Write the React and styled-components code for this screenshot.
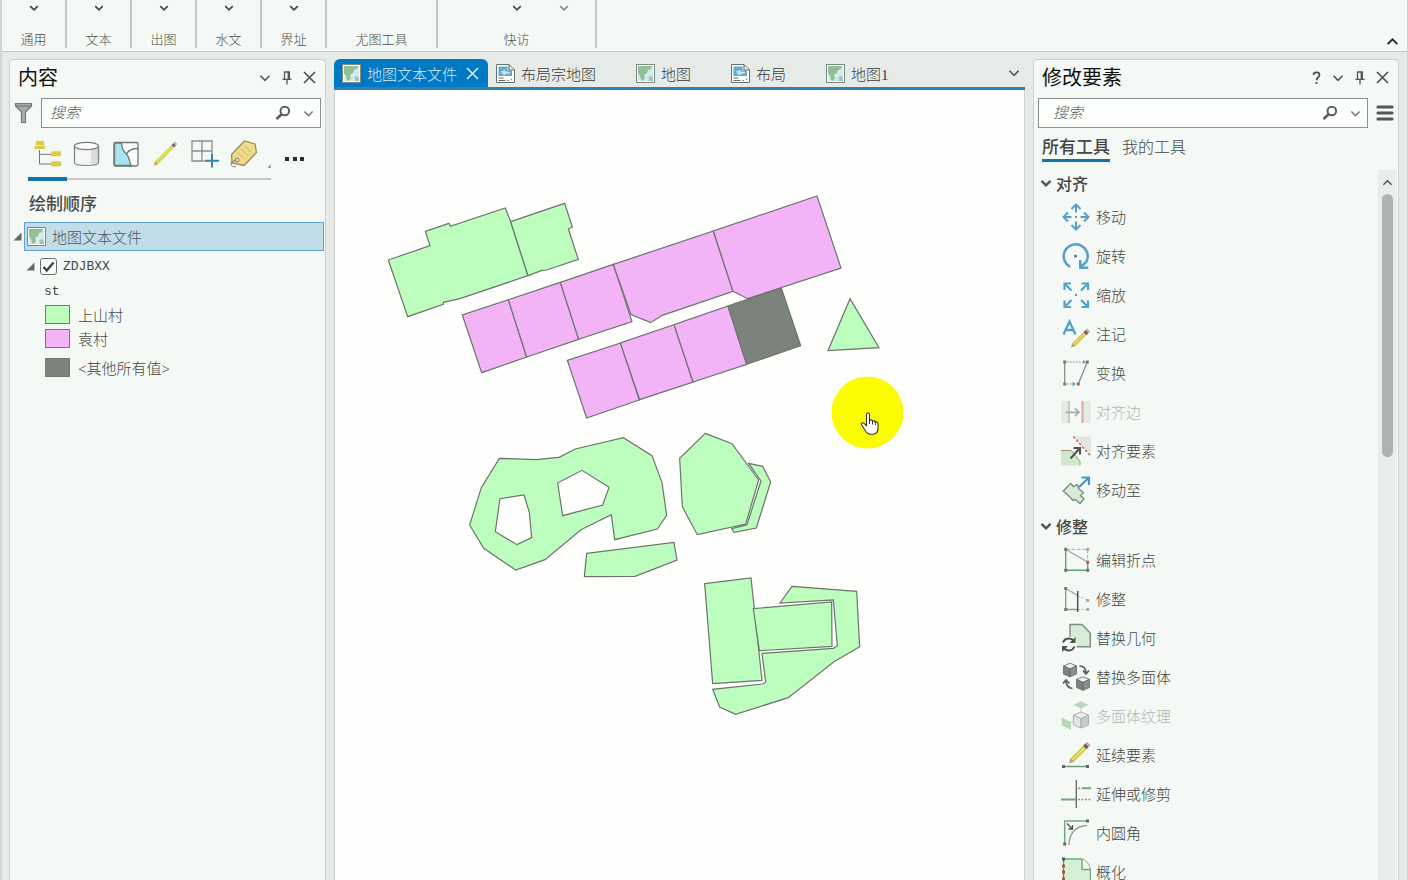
import React from 'react';
import styled, { createGlobalStyle } from 'styled-components';

const GlobalStyle = createGlobalStyle`
  * { box-sizing: border-box; }
  html, body { margin: 0; padding: 0; }
  body {
    background: #e7ebe8;
    color: #444744;
    font-family: "Liberation Serif", "Noto Sans CJK SC", sans-serif;
    font-size: 15px;
    font-weight: 300;
  }
  button, input { font: inherit; color: inherit; }
  button { margin: 0; padding: 0; border: 0; background: none; cursor: pointer; }
  svg { display: block; flex: none; }
`;

const Window = styled.div`
  display: flex;
  flex-direction: column;
  height: 100vh;
  overflow: hidden;
  border-left: 2px solid #d3d7d4;
  border-right: 1px solid #cfd3d0;
`;

/* ribbon */

const Ribbon = styled.header`
  display: flex;
  height: 52px;
  flex: none;
  background: #f4f9f5;
  border-bottom: 1px solid #c4c9c5;
`;

const RibbonGroup = styled.section`
  display: flex;
  flex-direction: column;
  justify-content: space-between;
  align-items: center;
  width: ${(p) => p.$width}px;
  height: 48px;
  border-right: 2px solid #c3c7c4;
`;

const RibbonArrows = styled.div`
  display: flex;
  align-items: center;
  justify-content: center;
  gap: 27px;
  height: 16px;
  padding-left: ${(p) => (p.$two ? 47 : 0)}px;
`;

const RibbonLabel = styled.span`
  font-size: 13px;
  line-height: 16px;
  color: #4d504d;
`;

const RibbonCollapse = styled.button`
  align-self: flex-end;
  margin-left: auto;
  padding: 0 8px 3px;
`;

/* panels */

const Workspace = styled.main`
  display: flex;
  gap: 8px;
  flex: 1;
  min-height: 0;
  padding: 7px 8px 0 7px;
`;

const Panel = styled.aside`
  display: flex;
  flex-direction: column;
  flex: none;
  width: ${(p) => p.$width}px;
  background: #f4f9f5;
  border: 1px solid #cdd2ce;
  border-bottom: 0;
  border-radius: 5px 5px 0 0;
`;

const PanelHeader = styled.div`
  display: flex;
  align-items: center;
  height: 38px;
  flex: none;
  padding: 0 5px 3px 8px;
`;

const PanelTitle = styled.h2`
  margin: 0 auto 0 0;
  font-size: 20px;
  font-weight: 400;
  line-height: 28px;
  color: #111;
`;

const IconButton = styled.button`
  display: flex;
  align-items: center;
  justify-content: center;
  width: ${(p) => p.$width || 22}px;
  height: 24px;
  flex: none;
`;

const SearchRow = styled.div`
  display: flex;
  align-items: center;
  gap: 8px;
  flex: none;
  padding: 0 4px;
`;

const SearchBox = styled.label`
  display: flex;
  align-items: center;
  flex: 1;
  min-width: 0;
  height: 30px;
  padding-left: ${(p) => p.$indent}px;
  background: #fdfffd;
  border: 1px solid #8b908c;
`;

const SearchInput = styled.input`
  flex: 1;
  min-width: 0;
  padding: 0;
  border: 0;
  outline: 0;
  background: transparent;
  &::placeholder {
    color: #5b5e5b;
    opacity: 1;
    font-style: italic;
  }
`;

/* contents panel */

const ToolStrip = styled.div`
  display: flex;
  align-items: flex-start;
  flex: none;
  gap: 13px;
  margin: 3px 0 0 18px;
`;

const ViewTabs = styled.div`
  display: flex;
  width: 243px;
  height: 49px;
  border-bottom: 2px solid #c5c9c6;
`;

const ViewTab = styled.button`
  display: flex;
  align-items: center;
  justify-content: center;
  width: 39px;
  height: 50px;
  border-bottom: 4px solid ${(p) => (p.$active ? '#1173ad' : 'transparent')};
`;

const MoreButton = styled(IconButton)`
  height: 56px;
`;

const TreeHeading = styled.h3`
  margin: 0;
  padding-left: 19px;
  font-size: 17px;
  font-weight: 500;
  line-height: 35px;
  color: #4a4d4a;
`;

const TreeRow = styled.div`
  display: flex;
  align-items: center;
  height: ${(p) => p.$height}px;
  padding-left: ${(p) => p.$indent}px;
`;

const TwistButton = styled.button`
  display: flex;
  width: 11px;
  justify-content: flex-start;
`;

const SelectedItem = styled.button`
  display: flex;
  align-items: center;
  gap: 6px;
  flex: 1;
  height: 29px;
  margin-right: 1px;
  padding-left: 2px;
  background: #c0dde9;
  border: 1px solid #5fa4cd;
  color: #4a5659;
`;

const LayerLabel = styled.label`
  display: flex;
  align-items: center;
  gap: 6px;
  margin-left: 3px;
`;

const LayerCheck = styled.input`
  appearance: none;
  width: 17px;
  height: 17px;
  margin: 0;
  border: 1px solid #6c706d;
  border-radius: 3px;
  background: #fdfffd;
  &:checked {
    background: #fdfffd url("data:image/svg+xml,%3Csvg xmlns='http://www.w3.org/2000/svg' viewBox='0 0 15 15'%3E%3Cpath d='M2.5 8l3.3 3.5L12.500 3.500' fill='none' stroke='%23404340' stroke-width='2.400'/%3E%3C/svg%3E");
  }
`;

const FieldText = styled.span`
  font-family: "Liberation Mono", monospace;
  font-size: 13px;
  line-height: 16px;
`;

const LegendRow = styled(TreeRow)`
  gap: 8px;
  margin-top: ${(p) => (p.$spaced ? 5 : 0)}px;
`;

const Swatch = styled.span`
  width: 25px;
  height: 19px;
  border: 1px solid #6f7a70;
  background: ${(p) => p.$color};
`;

/* map view */

const MapPane = styled.section`
  display: flex;
  flex-direction: column;
  flex: 1;
  min-width: 0;
`;

const MapTabs = styled.nav`
  display: flex;
  align-items: stretch;
  height: 31px;
  flex: none;
  border-bottom: 3px solid #2c82b8;
`;

const MapTab = styled.div`
  display: flex;
  align-items: center;
  padding: 0 ${(p) => (p.$active ? 0 : 32)}px 0 8px;
  border-radius: 6px 6px 0 0;
  background: ${(p) => (p.$active ? '#0079c4' : 'transparent')};
  color: ${(p) => (p.$active ? '#d5ecf8' : '#383b38')};
`;

const MapTabButton = styled.button`
  display: flex;
  align-items: center;
  gap: 6px;
  white-space: nowrap;
`;

const TabOverflow = styled(IconButton)`
  align-self: center;
  margin-left: auto;
`;

const Canvas = styled.div`
  flex: 1;
  min-height: 0;
  overflow: hidden;
  background: #fefffd;
  border: solid #cdd2ce;
  border-width: 0 1px;
`;

/* modify features panel */

const ToolTabs = styled.div`
  display: flex;
  gap: 12px;
  flex: none;
  height: 40px;
  padding: 8px 0 0 8px;
`;

const ToolTab = styled.button`
  height: 26px;
  font-size: ${(p) => (p.$active ? 17 : 16)}px;
  line-height: 23px;
  font-weight: ${(p) => (p.$active ? 500 : 300)};
  border-bottom: 3px solid ${(p) => (p.$active ? '#1173ad' : 'transparent')};
`;

const ToolScroll = styled.div`
  display: flex;
  flex: 1;
  min-height: 0;
  overflow: hidden;
`;

const ToolGroups = styled.div`
  flex: 1;
`;

const GroupHeader = styled.button`
  display: flex;
  align-items: center;
  gap: 4px;
  height: 29px;
  padding-left: 6px;
  font-size: 16px;
  font-weight: 500;
`;

const ToolList = styled.ul`
  margin: 0;
  padding: 0 0 2px 27px;
  list-style: none;
`;

const ToolButton = styled.button`
  display: flex;
  align-items: center;
  gap: 5px;
  height: 39px;
  &:disabled {
    color: #b3b6b3;
    cursor: default;
  }
`;

const ScrollTrack = styled.div`
  display: flex;
  flex-direction: column;
  align-items: center;
  width: 19px;
  margin: 2px 1px 0 0;
  background: #eaedea;
`;

const ScrollThumb = styled.div`
  width: 11px;
  height: 37%;
  border-radius: 6px;
  background: #b0b3b0;
`;

/* small glyphs */

const Chevron = ({ size = 12, color = '#555', width = 1.6, up }) => (
  <svg width={size} height={size} viewBox="0 0 12 12" fill="none" stroke={color} strokeWidth={width}>
    <path d={up ? 'M1.500 8.500L6 4l4.500 4.500' : 'M1.500 3.800L6 8.300l4.500-4.500'} />
  </svg>
);

const Pin = () => (
  <svg width="12" height="14" viewBox="0 0 12 14" fill="none" stroke="#555" strokeWidth="1.3">
    <path d="M3 1h6M3.500 1v7M1.500 8.300h9M6 8.300V13.500" />
    <path d="M7.800 1v7" strokeWidth="2.400" />
  </svg>
);

const Cross = ({ color = '#4b4e4b' }) => (
  <svg width="13" height="13" viewBox="0 0 13 13" stroke={color} strokeWidth="1.600">
    <path d="M1 1l11 11M12 1L1 12" />
  </svg>
);

const Help = () => (
  <svg width="9" height="14" viewBox="0 0 9 14" fill="none" stroke="#4b4e4b" strokeWidth="1.700">
    <path d="M1.500 4C1.500 0.500 7.500 0.500 7.500 4C7.500 6.300 4.500 6.300 4.500 9.300M4.500 11v2" />
  </svg>
);

const Magnifier = () => (
  <svg width="16" height="16" viewBox="0 0 16 16" fill="none" stroke="#5b5e5b">
    <circle cx="9.800" cy="6" r="4.300" strokeWidth="2" />
    <path d="M6.600 9.300L1.500 14" strokeWidth="2.600" />
  </svg>
);

const Funnel = () => (
  <svg width="19" height="22" viewBox="0 0 19 22" stroke="#777" strokeWidth="1.200">
    <path d="M1.500 1.500h16v2.500l-6 6v10.500h-4V10l-6-6z" fill="#a9acaa" />
    <path d="M2 4h15" fill="none" />
  </svg>
);

const Menu = () => (
  <svg width="18" height="18" viewBox="0 0 18 18" stroke="#555855" strokeWidth="3.200" strokeLinecap="round">
    <path d="M2 3h14M2 9h14M2 15h14" />
  </svg>
);

const Dots = () => (
  <svg width="20" height="6" viewBox="0 0 20 6" fill="#2c2e2c">
    <path d="M0 1h4v4H0zM8 1h4v4H8zM15 1h4v4h-4z" />
  </svg>
);

const ClippedView = () => (
  <svg width="9" height="47" viewBox="0 0 9 47" fill="#777a77">
    <path d="M8.500 33v4H6z" />
  </svg>
);

const Twist = () => (
  <svg width="9" height="9" viewBox="0 0 9 9" fill="#666a67">
    <path d="M8.500 0.500v8H0.500z" />
  </svg>
);

const MapIcon = () => (
  <svg width="19" height="19" viewBox="0 0 19 19">
    <rect x="0.500" y="0.500" width="18" height="18" fill="#f4faf3" stroke="#7d8a80" />
    <path d="M2 2h15v15H2z" fill="#d3ebef" />
    <path d="M2 2h14l-1 3-3 1-1 3-3 2 1 3-2 3-2-1-1-4-2-3z" fill="#8fc096" />
    <path d="M12.500 13l3-1 1.500 3v2h-4z" fill="#9fc7ae" />
  </svg>
);

const LayoutIcon = () => (
  <svg width="19" height="19" viewBox="0 0 19 19">
    <path d="M0.500 0.500h12.500l5.500 5.500v12.500H0.500z" fill="#fbfdfb" stroke="#66716d" />
    <path d="M2.500 2.500h9v4h4.500v5.500H2.500z" fill="#62a9d2" />
    <path d="M5 7.500l4-1.500 1 1.500 4 .5v1.500l-4 .5-2 1.500-1.500-2z" fill="#c9e4ef" />
    <path d="M13 0.500v5.500h5.500M2.500 14h5M2.500 16.500h7M11.500 16.500h1.500M15 15.500h1" fill="none" stroke="#66716d" strokeWidth="1.200" />
  </svg>
);

/* 28px icons above the layer tree */

const viewIcons = [
  {
    label: '按绘制顺序列出',
    art: (
      <>
        <path d="M5.500 10v14h12M5.500 14.300h12" fill="none" stroke="#777" />
        <path d="M2.500 0.700h7l2 8.300H0.500zM18.500 11.300h8.500v5h-10v-3.500zM18.500 21.300h8.500v5h-10v-3.500z" fill="#d8cd45" />
        <path d="M1 5.500h10" stroke="#efe99a" />
      </>
    ),
  },
  {
    label: '按数据源列出',
    art: (
      <g stroke="#7d807d" strokeWidth="1.200">
        <path d="M1.500 6v16.500c0 4 24 4 24 0V6" fill="#f3f6f3" />
        <path d="M18 9.500l7-2v15l-7 2.500z" fill="#d9dcd9" stroke="none" />
        <ellipse cx="13.500" cy="6" rx="12" ry="3.700" fill="#fbfdfb" />
        <path d="M25.500 6v17" />
      </g>
    ),
  },
  {
    label: '按选择列出',
    art: (
      <g stroke="#6d7875" strokeWidth="1.300">
        <rect x="2" y="2.500" width="24" height="23.500" rx="1.500" fill="#fbfdfb" />
        <path d="M2.500 3h7c0 5 1.500 8 5 11 2.500 2.500 3 7.500 4.500 11.500H2.500z" fill="#a9e3f1" />
        <path d="M14.500 14c2-4 5-5.500 11.500-5.500" fill="none" />
      </g>
    ),
  },
  {
    label: '按编辑列出',
    art: (
      <>
        <path d="M3 25.500l1-4L21 4.500l2.500 2.500L7 24z" fill="#d9ce48" />
        <path d="M3 25.500l1-4 3 2.500z" fill="#b7a57f" />
        <path d="M5.500 22L22 6" stroke="#f1eba2" />
        <path d="M20.500 5l2-2 2.500 2.500-2 2z" fill="#6b6d6b" />
        <path d="M22.500 3L24 1.500l2.500 2.500L25 5.500z" fill="#dba9a0" />
      </>
    ),
  },
  {
    label: '按捕捉列出',
    art: (
      <>
        <path d="M2 1h20v20H2zM12 1v20M2 11h20" fill="none" stroke="#8b8e8b" strokeWidth="1.300" />
        <path d="M22 13v15M14.500 20.700h15" stroke="#f4f9f5" strokeWidth="4" />
        <path d="M22 13.500v14M15 20.700h14" stroke="#3382b3" strokeWidth="2" />
      </>
    ),
  },
  {
    label: '按标注列出',
    art: (
      <>
        <path d="M2.500 14.500L15.500 1l10.500 3 1.500 8.500L15 25.500 3 23z" fill="#eedb8b" stroke="#9d8d50" strokeWidth="1.300" />
        <path d="M8.500 12.500l6.500 6M12 9l7 6.500M15.500 6l6.500 6" stroke="#c8b25c" />
        <circle cx="8" cy="20" r="2" fill="#f4f9f5" stroke="#777" />
        <path d="M7.500 20c-1.500 1-5 .5-5.500 3.500s3 3.500 5 3" fill="none" stroke="#777" />
      </>
    ),
  },
];

/* 30px icons of the tool list */

const dot = (x, y, fill = '#777') => <rect x={x - 1.5} y={y - 1.5} width="3" height="3" fill={fill} />;

const Pencil = ({ x, y, scale = 1 }) => (
  <g transform={`translate(${x} ${y}) scale(${scale})`}>
    <path d="M0 18l1.500-4.500L13 2l3 3L4.500 16.500z" fill="#d6c945" />
    <path d="M0 18l1.500-4.500 3 3z" fill="#b9a47d" />
    <path d="M3 15L14 4" stroke="#eee69a" />
    <path d="M12.500 2.500l2-2L17.500 3.500l-2 2z" fill="#5f615f" />
    <path d="M14.500.5L16-1l3 3L17.500 3.500z" fill="#cfa09a" />
  </g>
);

const Cube = ({ x, y, r, pale }) => (
  <g transform={`translate(${x} ${y}) scale(${r})`} strokeWidth=".12" stroke={pale ? '#aaadaa' : '#666'} strokeLinejoin="round">
    <path d="M0-1L.95-.6 0-.15-.95-.6z" fill="#eceeec" />
    <path d="M-.95-.6L0-.15V1L-.95.6z" fill={pale ? '#e3e6e3' : '#808380'} />
    <path d="M.95-.6L0-.15V1L.95.6z" fill={pale ? '#c9ccc9' : '#8c8f8c'} />
  </g>
);

const toolArt = {
  move: (
    <g fill="none" stroke="#569fcb" strokeWidth="2">
      <path d="M15 10.500V3M15 19.500V27M10.500 15H3M19.500 15H27" />
      <path d="M10.500 7L15 2.500 19.500 7M10.500 23l4.500 4.500 4.500-4.500M7 10.500L2.500 15 7 19.500M23 10.500l4.500 4.500-4.500 4.500" />
      <circle cx="15" cy="15" r="1" fill="#666" stroke="none" />
    </g>
  ),
  rotate: (
    <g fill="none" stroke="#569fcb" strokeWidth="2.500">
      <path d="M9 25.800A12 12 0 1 1 25.500 20.500L20 26" />
      <path d="M19.300 19v7.700h8" />
      <circle cx="14.500" cy="15" r="1.500" fill="#5d6d78" stroke="none" />
    </g>
  ),
  scale: (
    <g fill="none" stroke="#569fcb" strokeWidth="2.200">
      <path d="M4 4l6.500 6.500M26.500 4L20 10.500M4 26.500l6.500-6.500M26.500 26.500L20 20" />
      <path d="M3.500 10V3.500H10M20.500 3.500H27V10M3.500 20.500V27H10M27 20.500V27h-6.500" />
      <circle cx="15" cy="15" r="1" fill="#666" stroke="none" />
    </g>
  ),
  annotate: (
    <>
      <path d="M2.500 15.500L8.500 2.500l6 13M4.500 11h8" fill="none" stroke="#569fcb" strokeWidth="2.300" />
      <Pencil x={10} y={10.500} />
    </>
  ),
  transform: (
    <>
      <path d="M3.700 4v22M26.300 4l-9 22" stroke="#8b8e8b" strokeWidth="1.300" />
      <path d="M6 4h16" stroke="#6a8ba6" strokeDasharray="1.500 1.500" />
      <path d="M6 26h6" stroke="#6a8ba6" strokeDasharray="1.500 1.500" />
      <path d="M22 2l3 2-3 2zM11.500 23.500l3.500 2.500-3.500 2.500z" fill="#5ba5d0" />
      {dot(3.7, 4, '#96685a')}{dot(26.3, 4, '#96685a')}{dot(3.7, 26, '#b3654c')}{dot(17.3, 26, '#b3654c')}
    </>
  ),
  alignEdge: (
    <>
      <path d="M0 4h8v22H0zM21.500 4H30v22h-8.500z" fill="#e5ece6" />
      <path d="M8 4v22" stroke="#b9beb9" strokeWidth="1.500" />
      <path d="M21.500 4v22" stroke="#dda99f" strokeWidth="2" />
      <path d="M4.500 15.300H18M14 11.500l4 3.800-4 3.800" fill="none" stroke="#aaaeaa" strokeWidth="1.800" />
    </>
  ),
  alignFeature: (
    <>
      <path d="M12.300.5H30v20z" fill="#e4e4e1" />
      <path d="M12.300.5L30 20.500" stroke="#c65d58" strokeWidth="1.400" strokeDasharray="2.500 2" />
      <path d="M0 14.500h10.500L19 25.500V29.500H0z" fill="#cde8cd" />
      <path d="M0 14.500h10.500L19 25.500V29.500" fill="none" stroke="#a59080" />
      <path d="M9.500 22.500L18.500 12.500M12.500 12h6.500v6.500" fill="none" stroke="#4e514e" strokeWidth="2" />
    </>
  ),
  moveTo: (
    <>
      <path d="M2.300 16l7.400-7.500 2.800 3L16 9.500l2 4.500 4.500 3.500-3 3 3.500 3.500-4 4.500-4.500-4-2.500 1-2-2.500z" fill="#d6ecd5" stroke="#7f8a80" strokeWidth="1.400" />
      <path d="M18 12L27 3.500M20.500 2.500H28V10" fill="none" stroke="#4497c7" strokeWidth="2.200" />
    </>
  ),
  editVertices: (
    <>
      <path d="M4.700 4.300h22v13" fill="none" stroke="#aaadaa" strokeDasharray="4 1.500" />
      <path d="M4.700 4.300l22 13" stroke="#a0a69f" strokeWidth="1.200" />
      <path d="M4.700 4.300v21h22v-8" fill="none" stroke="#65a070" strokeWidth="1.400" />
      {dot(4.7, 4.3)}{dot(26.7, 4.3, '#aaa')}{dot(26.7, 17.3, '#c4573f')}{dot(26.7, 25.3, '#5c7a62')}{dot(4.7, 25.3, '#5c7a62')}
    </>
  ),
  reshape: (
    <>
      <path d="M16.700 11.500l10 5M16.700 25.500h10" fill="none" stroke="#b9bcb9" strokeDasharray="2.500 1.500" />
      <path d="M16.700 11.500l-12-7" stroke="#a0a69f" strokeWidth="1.200" />
      <path d="M4.700 4.500v21h12" fill="none" stroke="#75a97e" strokeWidth="1.300" />
      <path d="M16.700 7v21" stroke="#4e514e" strokeWidth="1.500" />
      {dot(4.7, 4.5)}{dot(4.7, 25.5)}{dot(26.7, 16.5, '#aaa')}{dot(26.7, 25.5, '#aaa')}
    </>
  ),
  replaceGeometry: (
    <>
      <path d="M9 1.500h12l8.300 8.700v13.600H16L9 14z" fill="#d6ecd5" stroke="#7f8a80" strokeWidth="1.400" />
      <circle cx="8" cy="21.500" r="8" fill="#f4f9f5" />
      <path d="M2 19.500c2-5 8-5 11-1.500M13.500 23.500c-2 5-8 5-11 1.500" fill="none" stroke="#4e514e" strokeWidth="2" />
      <path d="M14.500 14v6H8.500zM1 29v-6h6z" fill="#4e514e" />
    </>
  ),
  replaceMultipatch: (
    <>
      <Cube x={9} y={8} r={6.8} />
      <Cube x={22} y={21.5} r={6.8} />
      <path d="M18.500 4c5 0 6.500 3 6.500 7.500M22 8.500l3 3.500 3-3.500M11.500 26.500C6.500 26 5 23 5 18M2 21.500l3-3.500 3.500 3.500" fill="none" stroke="#5b5e5b" strokeWidth="1.700" />
    </>
  ),
  texture: (
    <>
      <path d="M12.500 4l7.500-4 7.500 4-7.500 3.500z" fill="#b5dab9" />
      <path d="M20 7v6M10 21l4-1" stroke="#dcc9a0" />
      <Cube x={20} y={19} r={8} pale />
      <path d="M.7 16.500l9.300 4.500v7.700L.7 24.500z" fill="#b5dab9" />
    </>
  ),
  continueFeature: (
    <>
      <Pencil x={8} y={3} scale={1.13} />
      <path d="M2 26.500h25" stroke="#71987a" strokeWidth="1.500" />
      {dot(2.5, 26.5, '#5c6a60')}{dot(26.5, 26.5, '#5c6a60')}
    </>
  ),
  extend: (
    <>
      <path d="M15.300 1v28" stroke="#6b706c" strokeWidth="1.400" />
      <path d="M22 9.300h8M0 20.500h15" stroke="#6fa978" strokeWidth="1.900" />
      <path d="M17 9.300h5M17 20.500h13" stroke="#8b8e8b" strokeWidth="1.400" strokeDasharray="2 1.500" />
    </>
  ),
  fillet: (
    <>
      <path d="M3.700 26V3h23" fill="none" stroke="#6fa978" strokeWidth="1.500" />
      <path d="M8 27C8 15 15 8 26 7.500" fill="none" stroke="#a09a96" strokeWidth="1.400" />
      <path d="M6 5.500l5 5M11.500 7v4H7.500" fill="none" stroke="#4e514e" strokeWidth="1.300" />
      {dot(26.5, 3, '#666')}{dot(3.7, 26, '#666')}
    </>
  ),
  generalize: (
    <>
      <path d="M2.500 2H21v10.500h8.500V30h-27z" fill="#d6f0d6" stroke="#6fa978" strokeWidth="1.400" />
      <path d="M21 2c5 1.500 7 5 8.500 10.500" fill="none" stroke="#999c99" />
      <path d="M2.500 2v28" stroke="#a8563f" strokeDasharray="3 2" />
      {dot(2.5, 2, '#555')}{dot(2.5, 9, '#a8563f')}{dot(2.5, 15, '#a8563f')}{dot(2.5, 22, '#a8563f')}
    </>
  ),
};

const toolGroups = [
  {
    title: '对齐',
    tools: [
      { name: '移动', icon: 'move' },
      { name: '旋转', icon: 'rotate' },
      { name: '缩放', icon: 'scale' },
      { name: '注记', icon: 'annotate' },
      { name: '变换', icon: 'transform' },
      { name: '对齐边', icon: 'alignEdge', disabled: true },
      { name: '对齐要素', icon: 'alignFeature' },
      { name: '移动至', icon: 'moveTo' },
    ],
  },
  {
    title: '修整',
    tools: [
      { name: '编辑折点', icon: 'editVertices' },
      { name: '修整', icon: 'reshape' },
      { name: '替换几何', icon: 'replaceGeometry' },
      { name: '替换多面体', icon: 'replaceMultipatch' },
      { name: '多面体纹理', icon: 'texture', disabled: true },
      { name: '延续要素', icon: 'continueFeature' },
      { name: '延伸或修剪', icon: 'extend' },
      { name: '内圆角', icon: 'fillet' },
      { name: '概化', icon: 'generalize' },
    ],
  },
];

const ribbonGroups = [
  { name: '通用', width: 65, arrows: 1 },
  { name: '文本', width: 65, arrows: 1 },
  { name: '出图', width: 65, arrows: 1 },
  { name: '水文', width: 65, arrows: 1 },
  { name: '界址', width: 65, arrows: 1 },
  { name: '尤图工具', width: 111, arrows: 0 },
  { name: '快访', width: 159, arrows: 2 },
];

const mapTabs = [
  { name: '地图文本文件', Icon: MapIcon, active: true },
  { name: '布局宗地图', Icon: LayoutIcon },
  { name: '地图', Icon: MapIcon },
  { name: '布局', Icon: LayoutIcon },
  { name: '地图1', Icon: MapIcon },
];

const GREEN = '#bdfebf';
const PINK = '#f3b4f7';
const GRAY = '#7c827c';

const legend = [
  { name: '上山村', color: GREEN },
  { name: '袁村', color: PINK },
  { name: '<其他所有值>', color: GRAY, spaced: true },
];

// parcel outlines, three units to a pixel, each sheet with its own origin
const sheets = [
  {
    x: 45,
    y: 100,
    parcels: [
      [GREEN, 'M25 210L83 380 190 343V337L240 326 444 257 392 95 376 54 211 109 207 100 136 124 150 167z'],
      [GREEN, 'M392 95L554 40 577 111 565 117 595 208 500 240 486 241 444 257z'],
      [PINK, 'M247 375L305 548 440 501 385 329z'],
      [PINK, 'M385 329L440 501 596 448 541 277z'],
      [PINK, 'M541 277L596 448 756 395 700 223z'],
      [PINK, 'M562 511L620 684 778 630 722 459z'],
    ],
  },
  {
    x: 265,
    y: 100,
    parcels: [
      [PINK, 'M40 223L93 374 152 398 187 376 399 304 340 123z'],
      [PINK, 'M340 123L399 304 443 326 723 234 651 18z'],
      [PINK, 'M61 459L119 629 279 576 222 404z'],
      [PINK, 'M222 404L279 576 440 523 384 348z'],
      [GRAY, 'M384 348L440 523 602 467 544 294z'],
      [GREEN, 'M750 326L684 482 837 473z'],
    ],
  },
  {
    x: 125,
    y: 335,
    parcels: [
      [GREEN, 'M118 100L228 104 297 97 346 72 490 38 576 92 606 173 620 271 592 312 464 344 454 269 363 314 255 404 167 435 71 370 29 300 64 188zM120 221L106 320 171 359 215 338 208 262 192 210zM293 174L308 272 428 240 447 187 366 136z'],
      [GREEN, 'M380 385L642 352 651 405 525 454 373 455z'],
      [GREEN, 'M866 115L908 124 932 171 889 309 822 322 815 311 861 299 903 168z'],
      [GREEN, 'M736 25L816 56 896 165 857 297 712 329 667 245 659 100z'],
    ],
  },
  {
    x: 355,
    y: 475,
    parcels: [
      [GREEN, 'M44 56L183 39 216 346 68 356z'],
      [GREEN, 'M190 131L425 111 426 244 208 257z'],
      [GREEN, 'M306 64L500 79 509 245 432 290 295 398 137 448 89 426 68 373 218 357 227 351 216 265 430 250 442 242 430 105 270 114z'],
    ],
  },
];

const ParcelMap = () => (
  <svg width="100%" height="100%" role="img" aria-label="宗地">
    {sheets.map((sheet, i) => (
      <g key={i} transform={`translate(${sheet.x} ${sheet.y}) scale(0.33333)`}>
        {sheet.parcels.map(([fill, d]) => (
          <path key={d} d={d} fill={fill} fillRule="evenodd" stroke="#6b746c" strokeWidth="3.600" />
        ))}
      </g>
    ))}
    <circle cx="532.500" cy="322.500" r="36" fill="#fbfb02" />
    <path
      d="M531.500 324.500c0-2 3-2 3 0v6c1-1 2.800-.8 3 .8 1-.9 2.600-.5 2.800.8 1.200-.6 2.700 0 2.700 1.700v4c0 4-2 6.500-5 6.500h-2.500c-2.500 0-4-1.500-5.500-4l-3.500-5.500c-.8-1.600 1.200-2.800 2.600-1.500l2.400 2.200z"
      fill="#fff"
      stroke="#333"
      strokeWidth="1.100"
    />
    <path d="M534.500 330v4M537.500 331v3.500M540.300 332v3" stroke="#333" />
  </svg>
);

const Search = ({ indent, label }) => (
  <SearchBox $indent={indent}>
    <SearchInput type="text" placeholder="搜索" aria-label={label} />
    <IconButton type="button" $width={26} aria-label="搜索"><Magnifier /></IconButton>
    <IconButton type="button" $width={24} aria-label="搜索选项"><Chevron size={11} color="#777" /></IconButton>
  </SearchBox>
);

const PanelTools = ({ help }) => (
  <>
    {help && <IconButton aria-label="帮助"><Help /></IconButton>}
    <IconButton aria-label="选项"><Chevron /></IconButton>
    <IconButton aria-label="自动隐藏"><Pin /></IconButton>
    <IconButton aria-label="关闭"><Cross /></IconButton>
  </>
);

const ContentsPanel = () => (
  <Panel $width={317}>
    <PanelHeader>
      <PanelTitle>内容</PanelTitle>
      <PanelTools />
    </PanelHeader>
    <SearchRow>
      <IconButton $width={19} aria-label="过滤"><Funnel /></IconButton>
      <Search indent={8} label="搜索内容" />
    </SearchRow>
    <ToolStrip>
      <ViewTabs>
        {viewIcons.map((view, i) => (
          <ViewTab key={view.label} $active={i === 0} aria-label={view.label}>
            <svg width="28" height="28" viewBox="0 0 28 28" overflow="visible">{view.art}</svg>
          </ViewTab>
        ))}
        <ClippedView />
      </ViewTabs>
      <MoreButton aria-label="更多"><Dots /></MoreButton>
    </ToolStrip>
    <TreeHeading>绘制顺序</TreeHeading>
    <TreeRow $height={29} $indent={3}>
      <TwistButton aria-label="折叠"><Twist /></TwistButton>
      <SelectedItem><MapIcon />地图文本文件</SelectedItem>
    </TreeRow>
    <TreeRow $height={31} $indent={16}>
      <TwistButton aria-label="折叠"><Twist /></TwistButton>
      <LayerLabel>
        <LayerCheck type="checkbox" defaultChecked />
        <FieldText>ZDJBXX</FieldText>
      </LayerLabel>
    </TreeRow>
    <TreeRow $height={20} $indent={34}><FieldText>st</FieldText></TreeRow>
    {legend.map((entry) => (
      <LegendRow key={entry.name} $height={24} $indent={35} $spaced={entry.spaced}>
        <Swatch $color={entry.color} />
        {entry.name}
      </LegendRow>
    ))}
  </Panel>
);

const ModifyPanel = () => (
  <Panel $width={366}>
    <PanelHeader>
      <PanelTitle>修改要素</PanelTitle>
      <PanelTools help />
    </PanelHeader>
    <SearchRow>
      <Search indent={14} label="搜索工具" />
      <IconButton $width={18} aria-label="菜单"><Menu /></IconButton>
    </SearchRow>
    <ToolTabs>
      <ToolTab $active>所有工具</ToolTab>
      <ToolTab>我的工具</ToolTab>
    </ToolTabs>
    <ToolScroll>
      <ToolGroups>
        {toolGroups.map((group) => (
          <section key={group.title}>
            <GroupHeader><Chevron width={2.5} />{group.title}</GroupHeader>
            <ToolList>
              {group.tools.map((tool) => (
                <li key={tool.name}>
                  <ToolButton disabled={tool.disabled}>
                    <svg width="30" height="30" viewBox="0 0 30 30">{toolArt[tool.icon]}</svg>
                    {tool.name}
                  </ToolButton>
                </li>
              ))}
            </ToolList>
          </section>
        ))}
      </ToolGroups>
      <ScrollTrack>
        <IconButton $width={19} aria-label="向上滚动"><Chevron up size={11} /></IconButton>
        <ScrollThumb />
      </ScrollTrack>
    </ToolScroll>
  </Panel>
);

const App = () => (
  <Window>
    <GlobalStyle />
    <Ribbon>
      {ribbonGroups.map((group) => (
        <RibbonGroup key={group.name} $width={group.width}>
          <RibbonArrows $two={group.arrows === 2}>
            {Array.from({ length: group.arrows }).map((_, i) => (
              <IconButton key={i} $width={20} aria-label={group.name}>
                <Chevron size={10} color={i ? '#888' : '#444'} width={2} />
              </IconButton>
            ))}
          </RibbonArrows>
          <RibbonLabel>{group.name}</RibbonLabel>
        </RibbonGroup>
      ))}
      <RibbonCollapse aria-label="折叠功能区"><Chevron up size={13} color="#222" /></RibbonCollapse>
    </Ribbon>
    <Workspace>
      <ContentsPanel />
      <MapPane>
        <MapTabs>
          {mapTabs.map(({ name, Icon, active }) => (
            <MapTab key={name} $active={active}>
              <MapTabButton><Icon />{name}</MapTabButton>
              {active && <IconButton $width={31} aria-label="关闭"><Cross color="#d5ecf8" /></IconButton>}
            </MapTab>
          ))}
          <TabOverflow aria-label="所有视图"><Chevron /></TabOverflow>
        </MapTabs>
        <Canvas><ParcelMap /></Canvas>
      </MapPane>
      <ModifyPanel />
    </Workspace>
  </Window>
);

export default App;
